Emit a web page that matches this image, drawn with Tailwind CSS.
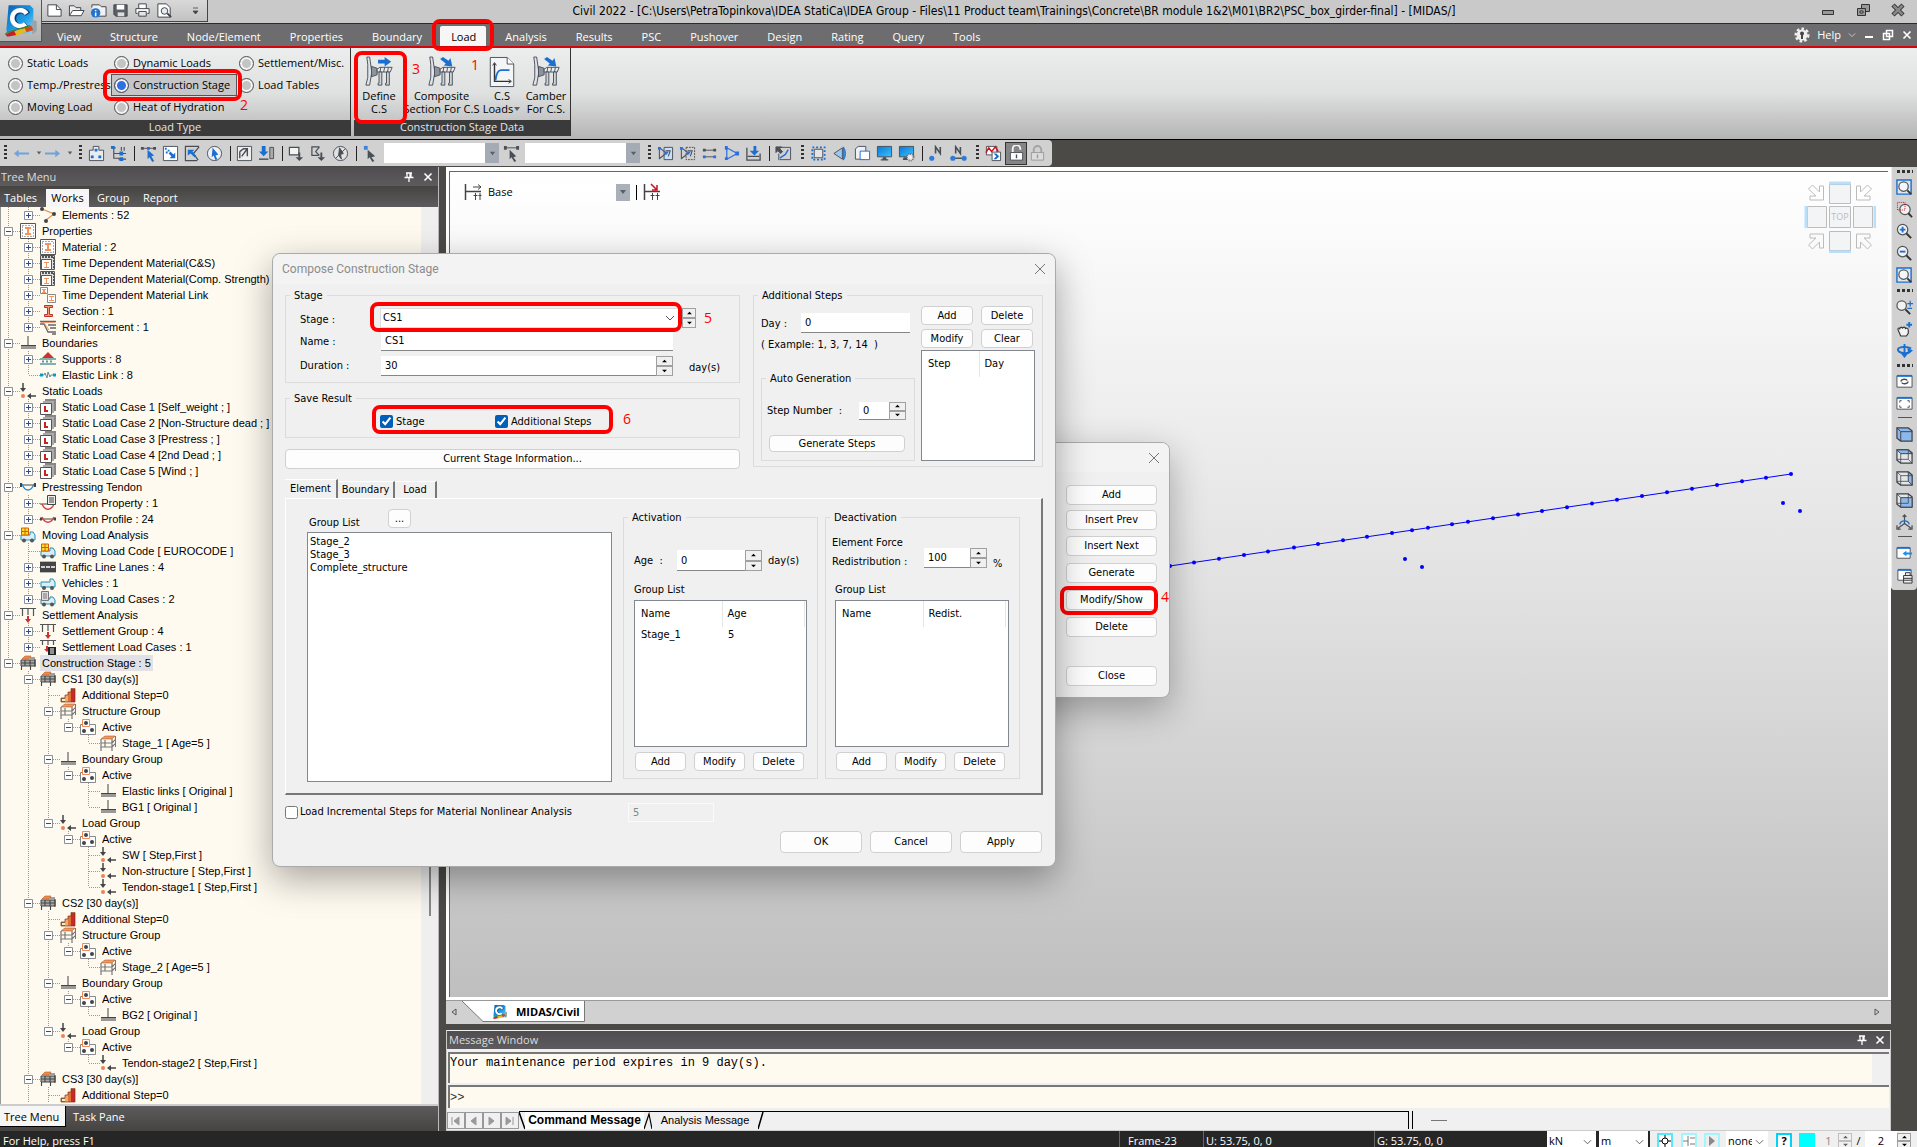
<!DOCTYPE html>
<html lang="en">
<head>
  <meta charset="UTF-8" />
  <title>Civil 2022</title>
  <meta name="viewport" content="width=device-width, initial-scale=1.0" />
  <script src="https://cdn.jsdelivr.net/npm/@tailwindcss/browser@4"></script>
</head>
<body class="relative h-screen flex flex-col overflow-hidden bg-[#4b4a46] text-black text-[11px] leading-[14px] font-['Open_Sans','Noto_Sans',sans-serif]">

  <!-- Icon sprite -->
  <svg class="absolute w-0 h-0">
    <defs>
      <linearGradient id="logoBg" x1="0" y1="0" x2="1" y2="1"><stop offset="0" stop-color="#0a5fb4" /><stop offset=".6" stop-color="#1fa0e8" /><stop offset="1" stop-color="#8fd8f8" /></linearGradient>
      <linearGradient id="screen" x1="0" y1="0" x2="1" y2="1"><stop offset="0" stop-color="#0a78d8" /><stop offset="1" stop-color="#38c4ff" /></linearGradient>
    </defs>

    <symbol id="logo" viewBox="0 0 32 32">
      <path d="M5 2h19l3 3v20l-3 2H4l-1-3z" fill="url(#logoBg)" />
      <path d="M26 15l4 1v9l-4 3z" fill="#9aa3a8" />
      <path d="M22 10a7 7 0 1 0-1 9" fill="none" stroke="#0b3f78" stroke-width="5" />
      <path d="M21 9.500a7 7 0 1 0-1 9" fill="none" stroke="#fff" stroke-width="4" />
      <path d="M2 28l9-4 3 4-10 2z" fill="#c8201c" /><path d="M10 25l10-3 2 3-10 4z" fill="#e8b81c" /><path d="M19 22l6-2 2 4-6 2z" fill="#d04a1c" />
      <path d="M2 28l2-2 20-6" fill="none" stroke="#3a8c30" stroke-width="1" />
    </symbol>

    <!-- quick access -->
    <symbol id="q-new" viewBox="0 0 18 18"><path d="M2 3h9l5 5v7H2z" fill="#fff" stroke="#3c4148" /><path d="M11 3v5h5" fill="none" stroke="#3c4148" /></symbol>
    <symbol id="q-open" viewBox="0 0 18 18"><path d="M1.500 14.500V4h5l2 2h5v3" fill="#eee" stroke="#3c4148" /><path d="M1.500 14.500L5 9h12l-3 5.500z" fill="#fff" stroke="#3c4148" /></symbol>
    <symbol id="q-info" viewBox="0 0 18 18"><path d="M2 6V3h8l2 2h5v10H9" fill="#f2f2f2" stroke="#3c4148" /><circle cx="6" cy="11.500" r="5" fill="#1f74d0" /><path d="M6 8.500v1.200M6 11v4" stroke="#fff" stroke-width="1.600" /></symbol>
    <symbol id="q-save" viewBox="0 0 18 18"><path d="M2 3h14v12H4l-2-2z" fill="#5a6068" stroke="#3c4148" /><path d="M5 3h8v5H5z" fill="#fff" /><path d="M6 11h7v4H6z" fill="#ddd" /></symbol>
    <symbol id="q-print" viewBox="0 0 18 18"><path d="M5 7V2h8v5M4 12H2V7h14v5h-2" fill="#fff" stroke="#3c4148" /><path d="M5 10h8v5H5z" fill="#e4e4e4" stroke="#3c4148" /></symbol>
    <symbol id="q-preview" viewBox="0 0 18 18"><path d="M2 2h9l4 4v10H2z" fill="#fff" stroke="#3c4148" /><circle cx="9" cy="9.500" r="3.500" fill="#e6ecf4" stroke="#3c4148" /><path d="M12 12l4 4" stroke="#3c4148" stroke-width="2" /></symbol>

    <!-- ribbon -->
    <symbol id="r-stage" viewBox="0 0 32 36">
      <path d="M3 2h3l2 14v4L6 32H2l2-8V10z" fill="#dfe4ea" stroke="#4a4f57" />
      <path d="M8 12l6 2v7l-6 2z" fill="#8e949c" stroke="#4a4f57" />
      <path d="M14 15l3-2h13l-2 5H14z" fill="#e9edf2" stroke="#4a4f57" /><path d="M18 13l-1 5M22 13l-1 5M26 13l-1 5" stroke="#4a4f57" />
      <path d="M16 18h3v14h-4v-2h1zM24 18h3v14h-4v-2h1z" fill="#cfd4da" stroke="#4a4f57" />
    </symbol>
    <symbol id="r-arrow" viewBox="0 0 32 36"><path d="M15 5h7V2l7 5-7 5V9h-7z" fill="#1b6fd0" /></symbol>
    <symbol id="r-arrow-down" viewBox="0 0 32 36"><path d="M17 2l6 4 2-3 2 9-9-1 2-2-6-5z" fill="#1b6fd0" /></symbol>
    <symbol id="r-loads" viewBox="0 0 32 36"><path d="M3.500 2.500h18l7 7v24h-25z" fill="#f3f5f6" stroke="#4a4f57" /><path d="M21.500 2.500v7h7" fill="#fff" stroke="#4a4f57" /><path d="M8 9v19h17" fill="none" stroke="#333" stroke-width="1.500" /><path d="M6 11l2-3 2 3M23 26l3 2-3 2" fill="none" stroke="#333" /><path d="M9 27c1-8 3-11 6-11h9" fill="none" stroke="#1b6fd0" stroke-width="2" /></symbol>

    <!-- toolbar -->
    <symbol id="t-back" viewBox="0 0 18 18"><path d="M1 9l5-4v3h11v2H6v3z" fill="#6fa3dc" /></symbol>
    <symbol id="t-fwd" viewBox="0 0 18 18"><path d="M17 9l-5-4v3H1v2h11v3z" fill="#6fa3dc" /></symbol>
    <symbol id="t-group" viewBox="0 0 18 18"><path d="M1.500 5.500h4v-4h6v4h5v11h-15z" fill="#e8ecf0" stroke="#4a4f57" /><path d="M7 4h3v3H7zM3 11h3v3H3zM11 11h3v3h-3z" fill="#1b6fd0" /></symbol>
    <symbol id="t-tree" viewBox="0 0 18 18"><path d="M2 3h4M4 3v11h6M4 9h6M12 2v4M15 2v4M9 9h8M9 15h8" fill="none" stroke="#4a4f57" stroke-width="1.200" /><path d="M1 1h4v3H1zM10 7h4v4h-4zM10 13h4v4h-4z" fill="#1b6fd0" /></symbol>
    <symbol id="t-select" viewBox="0 0 18 18"><path d="M2 3.500h14" stroke="#4a4f57" stroke-width="1" /><path d="M1 2h3v3H1zM14 2h3v3h-3z" fill="#4a4f57" /><path d="M7.500 2h3v3h-3zM8 5l7 6-3 1 3 5-2 1-3-5-2 2z" fill="#1b6fd0" /></symbol>
    <symbol id="t-window" viewBox="0 0 18 18"><path d="M1.500 1.500h15v15h-15z" fill="#fff" stroke="#4a4f57" /><path d="M3 3h2v2H3zM6 5h2v2H6zM4 7h2v2H4zM14 8v6H8l2-2-3-3 2-2 3 3z" fill="#1b6fd0" /></symbol>
    <symbol id="t-poly" viewBox="0 0 18 18"><path d="M16 1.500H1.500v15H14M16 2l-6 7 5 7" fill="none" stroke="#4a4f57" stroke-width="1.300" /><path d="M4 5h7l-2 2 4 5-2 1-4-4-3 2z" fill="#1b6fd0" /></symbol>
    <symbol id="t-circle" viewBox="0 0 18 18"><circle cx="9" cy="9" r="7.500" fill="#eef1f4" stroke="#4a4f57" /><path d="M7 3l6 7-3 1 2 4-2 1-2-5-2 2z" fill="#1b6fd0" /></symbol>
    <symbol id="t-undo" viewBox="0 0 18 18"><path d="M1.500 1.500h15v15h-15z" fill="#eee" stroke="#4a4f57" /><path d="M4 14V7M4 7l4-3h4v8M12 4l-6 8" fill="none" stroke="#4a4f57" stroke-width="1.500" /></symbol>
    <symbol id="t-recent" viewBox="0 0 18 18"><path d="M4 1h4v6h3l-5 5-5-5h3z" fill="#1b6fd0" /><path d="M1 15h10" stroke="#4a4f57" stroke-width="1.500" /><path d="M12.500 2.500h4v12h-4z" fill="#aaa" stroke="#4a4f57" /></symbol>
    <symbol id="t-un1" viewBox="0 0 18 18"><path d="M1.500 2.500h10v8h-10z" fill="#f4f4f4" stroke="#4a4f57" stroke-width="1.300" /><path d="M11 8h2v5h3l-4 4-4-4h3z" fill="#4a4f57" /></symbol>
    <symbol id="t-un2" viewBox="0 0 18 18"><path d="M10 2H2v9h7M10 2L6 7l4 4" fill="none" stroke="#4a4f57" stroke-width="1.300" /><path d="M11 8h2v5h3l-4 4-4-4h3z" fill="#4a4f57" /></symbol>
    <symbol id="t-un3" viewBox="0 0 18 18"><circle cx="9" cy="9" r="7.500" fill="#e2e2e2" stroke="#4a4f57" /><path d="M8 3l4 6-3 1 1 5-3-4zM4 14L14 4" fill="#4a4f57" stroke="#4a4f57" /></symbol>
    <symbol id="t-node" viewBox="0 0 18 18"><path d="M2 1h4v4H2z" fill="#3b82d8" /><path d="M6 5l8 7-4 1 3 4-2 1-3-5-2 2z" fill="#4a4f57" /></symbol>
    <symbol id="t-elem" viewBox="0 0 18 18"><path d="M2 3h14" stroke="#4a4f57" stroke-width="1" /><path d="M1 1h3v4H1zM14 1h3v4h-3zM7 5l7 7-3 1 3 4-2 1-3-5-2 2z" fill="#4a4f57" /></symbol>
    <symbol id="t-act1" viewBox="0 0 18 18"><path d="M7.500 2.500h9v13h-9z" fill="#c9dff5" stroke="#4a4f57" /><path d="M2.500 3v12M3 3l6 5M3 14l9-7M9 6h5l-2 6" fill="none" stroke="#4a4f57" stroke-width="1.100" /><path d="M1 2h3v3H1zM8 7h3v3H8z" fill="#2c6fe0" /></symbol>
    <symbol id="t-act2" viewBox="0 0 18 18"><path d="M7.500 2.500h9v13h-9z" fill="none" stroke="#4a4f57" stroke-dasharray="2 1" /><path d="M2.500 3v12M3 3l6 5M3 14l9-7M9 6h5l-2 6" fill="none" stroke="#4a4f57" stroke-width="1.100" /><path d="M1 2h3v3H1zM8 7h3v3H8z" fill="#2c6fe0" /></symbol>
    <symbol id="t-act3" viewBox="0 0 18 18"><path d="M3 5.500h12M3 12.500h12" stroke="#4a4f57" stroke-width="1" /><path d="M2 4h3v3H2zM13 4h3v3h-3z" fill="#4a4f57" /><path d="M2 11h3v3H2zM13 11h3v3h-3z" fill="#2c6fe0" /></symbol>
    <symbol id="t-act4" viewBox="0 0 18 18"><path d="M4 3l11 6-11 6z" fill="none" stroke="#2c6fe0" stroke-width="1.300" /><path d="M2 1h3v4H2zM13 7h4v4h-4zM2 13h3v3H2z" fill="#2c6fe0" /></symbol>
    <symbol id="t-act5" viewBox="0 0 18 18"><path d="M2 3v13h14V9M3 12h12" fill="none" stroke="#4a4f57" stroke-width="1.400" /><path d="M9 1h3v5h3l-5 5-5-5h4z" fill="#1b6fd0" /></symbol>
    <symbol id="t-act6" viewBox="0 0 18 18"><path d="M5 2.500h11.500v13H5" fill="none" stroke="#4a4f57" /><path d="M1 8V2h6L5 4l3 3-2 2-3-3zM4 16V9" fill="#4a4f57" stroke="#4a4f57" /><path d="M5 14l6-4 3-5" fill="none" stroke="#2c6fe0" stroke-width="1.600" /></symbol>
    <symbol id="t-sel" viewBox="0 0 18 18"><path d="M2.500 2.500h13v13h-13z" fill="none" stroke="#1b6fd0" stroke-width="2" stroke-dasharray="2 2" /><path d="M4.500 4.500h9v9h-9z" fill="#e4e4e4" stroke="#4a4f57" /></symbol>
    <symbol id="t-persp" viewBox="0 0 18 18"><path d="M2 9l9-6v12z" fill="#9cc8f0" stroke="#4a4f57" /><path d="M12 2c3 4 3 10 0 14z" fill="#3f8fe0" stroke="#1b6fd0" /></symbol>
    <symbol id="t-hide" viewBox="0 0 18 18"><path d="M1.500 4l3-2.500h8V12l-2 3h-9z" fill="#eef1f4" stroke="#4a4f57" /><path d="M6.500 6.500h10v9h-10z" fill="#fff" stroke="#1b6fd0" /></symbol>
    <symbol id="t-mon" viewBox="0 0 18 18"><path d="M1.500 1.500h15v11h-15z" fill="url(#screen)" stroke="#4a4f57" /><path d="M7 13h4v2h2v1.500H5V15h2z" fill="#4a4f57" /></symbol>
    <symbol id="t-mon2" viewBox="0 0 18 18"><path d="M1.500 1.500h15v11h-15z" fill="url(#screen)" stroke="#4a4f57" /><path d="M6 13h4v3H5z" fill="#4a4f57" /><circle cx="13" cy="13" r="3.500" fill="#eee" stroke="#666" stroke-dasharray="1 1" stroke-width="2" /></symbol>
    <symbol id="t-n1" viewBox="0 0 18 18"><path d="M8 9V2l5 7V2" fill="none" stroke="#4a4f57" stroke-width="1.700" /><circle cx="4" cy="14" r="2.700" fill="#2c7cd8" /></symbol>
    <symbol id="t-n2" viewBox="0 0 18 18"><path d="M6 9V2l5 7V2" fill="none" stroke="#4a4f57" stroke-width="1.700" /><path d="M3 14h12" stroke="#4a4f57" stroke-width="1.500" /><circle cx="3" cy="14" r="2.700" fill="#2c7cd8" /><circle cx="15" cy="14" r="2.700" fill="#2c7cd8" /></symbol>
    <symbol id="t-chk" viewBox="0 0 18 18"><path d="M1.500 1.500h11v9h-11z" fill="#fff" stroke="#4a4f57" /><path d="M1 8l3-5 3 4 4-5 3 5" fill="none" stroke="#d01020" stroke-width="1.600" /><path d="M7.500 7.500h9v9h-9z" fill="#fff" stroke="#4a4f57" /><path d="M9 9h3l3 3-3 3H9l3-3z" fill="#1b6fd0" /></symbol>
    <symbol id="t-unlock" viewBox="0 0 18 18"><path d="M5 8V4a4 4 0 0 1 8 0v1" fill="none" stroke="#f4f4f4" stroke-width="2" /><path d="M2.500 8h13v8h-13z" fill="#fff" stroke="#4a4f57" /><path d="M9 10v4" stroke="#4a4f57" stroke-width="1.500" /></symbol>
    <symbol id="t-lock" viewBox="0 0 18 18"><path d="M5 8V5a4 4 0 0 1 8 0v3" fill="none" stroke="#a4a4a4" stroke-width="2" /><path d="M2.500 8h13v8h-13z" fill="#dcdcdc" stroke="#9a9a9a" /><path d="M9 10v4" stroke="#9a9a9a" stroke-width="1.500" /></symbol>

    <!-- right toolbar -->
    <symbol id="v-fit" viewBox="0 0 18 18"><path d="M1 1h15v15H1z" fill="#dfe6ee" stroke="#1b6fd0" stroke-width="1.500" /><circle cx="8" cy="8" r="5" fill="#f4f6f8" stroke="#555" stroke-width="1.300" /><path d="M12 12l4 4" stroke="#333" stroke-width="2" /></symbol>
    <symbol id="v-win" viewBox="0 0 18 18"><circle cx="9.500" cy="9" r="5.500" fill="#f0f2f4" stroke="#555" stroke-width="1.300" /><path d="M13 13l4 4" stroke="#333" stroke-width="2" /><path d="M1.500 1.500h8v8h-8z" fill="none" stroke="#d01020" stroke-dasharray="1 1" /></symbol>
    <symbol id="v-in" viewBox="0 0 18 18"><circle cx="7" cy="7" r="5.500" fill="#f0f2f4" stroke="#555" stroke-width="1.300" /><path d="M11 11l5 5" stroke="#333" stroke-width="2.200" /><path d="M4 7h6M7 4v6" stroke="#1b6fd0" stroke-width="2" /></symbol>
    <symbol id="v-out" viewBox="0 0 18 18"><circle cx="7" cy="7" r="5.500" fill="#f0f2f4" stroke="#555" stroke-width="1.300" /><path d="M11 11l5 5" stroke="#333" stroke-width="2.200" /><path d="M4 7h6" stroke="#1b6fd0" stroke-width="2" /></symbol>
    <symbol id="v-dyn" viewBox="0 0 18 18"><circle cx="6" cy="8" r="5" fill="#f0f2f4" stroke="#555" stroke-width="1.300" /><path d="M10 12l5 5" stroke="#333" stroke-width="2" /><path d="M12 6h6M15 3v6M12 11h5" stroke="#1b6fd0" stroke-width="1.300" /></symbol>
    <symbol id="v-pan" viewBox="0 0 18 18"><path d="M2 10c0-2 2-2 2 0 0-3 2-3 3-1 0-2 3-2 3 0 2-1 3 0 3 2v3l-2 3H5z" fill="#f4f4f4" stroke="#333" stroke-width="1.200" /><path d="M11 5h6M14 2v6" stroke="#1b6fd0" stroke-width="2" /></symbol>
    <symbol id="v-rot" viewBox="0 0 18 18"><path d="M8 2h2v10h3l-4 5-4-5h3z" fill="#1b6fd0" /><path d="M14 11c-6 2-12 0-12-3s10-4 14-1" fill="none" stroke="#1b6fd0" stroke-width="2" /><path d="M12 6l6 3-5 4z" fill="#1b6fd0" /></symbol>
    <symbol id="v-redraw" viewBox="0 0 18 18"><path d="M1 3h16v12H1z" fill="#fff" stroke="#4a4f57" /><path d="M1 3h16" stroke="#1b6fd0" stroke-width="2" /><path d="M5 9c1-3 6-3 7-1M13 9c-1 3-6 3-7 1" fill="none" stroke="#4a4f57" stroke-width="1.400" /></symbol>
    <symbol id="v-full" viewBox="0 0 18 18"><path d="M1 3h16v12H1z" fill="#fff" stroke="#4a4f57" /><path d="M1 3h16" stroke="#1b6fd0" stroke-width="2" /><path d="M4 8V6h2M12 6h2v2M4 11v2h2M12 13h2v-2" fill="none" stroke="#4a4f57" /></symbol>
    <symbol id="v-cube1" viewBox="0 0 18 18"><path d="M1 2h12l4 3v11H5l-4-3z" fill="#8db8ea" stroke="#3c4148" stroke-width="1.300" /><path d="M1 2l4 4h12M5 6v10" fill="none" stroke="#3c4148" /></symbol>
    <symbol id="v-cube2" viewBox="0 0 18 18"><path d="M1 2h12l4 3v11H5l-4-3z" fill="#e4e6e8" stroke="#3c4148" stroke-width="1.300" /><path d="M1 2h12l4 4H5z" fill="#8db8ea" stroke="#3c4148" /><path d="M5 6v10M13 2v10H1M13 12l4 4" fill="none" stroke="#3c4148" stroke-width=".8" /></symbol>
    <symbol id="v-cube3" viewBox="0 0 18 18"><path d="M1 2h12l4 3v11H5l-4-3z" fill="#e4e6e8" stroke="#3c4148" stroke-width="1.300" /><path d="M13 2l4 4v10l-4-4z" fill="#8db8ea" stroke="#3c4148" /><path d="M1 2l4 4h12M5 6v10M13 12H1" fill="none" stroke="#3c4148" stroke-width=".8" /></symbol>
    <symbol id="v-cube4" viewBox="0 0 18 18"><path d="M1 2h12l4 3v11H5l-4-3z" fill="#e4e6e8" stroke="#3c4148" stroke-width="1.300" /><path d="M5 6h12v10H5z" fill="#8db8ea" stroke="#3c4148" /><path d="M1 2l4 4M13 2v10H1" fill="none" stroke="#3c4148" stroke-width=".8" /></symbol>
    <symbol id="v-axis" viewBox="0 0 18 18"><path d="M9 1v9M9 10l-7 5M9 10l7 5M7 3l2-2 2 2M1 12v4h4M17 12v4h-4" fill="none" stroke="#4a4f57" stroke-width="1.300" /><path d="M4 11c1-5 9-5 10 0" fill="none" stroke="#1b6fd0" stroke-width="1.400" /></symbol>
    <symbol id="v-prev" viewBox="0 0 18 18"><path d="M1 3h14v11H1z" fill="#fff" stroke="#4a4f57" /><path d="M1 3h14" stroke="#1b6fd0" stroke-width="2" /><path d="M7 9l4-3v2h6v2h-6v2z" fill="#1b8fe8" /></symbol>
    <symbol id="v-lock" viewBox="0 0 18 18"><path d="M2 3h14v11H2z" fill="#fff" stroke="#4a4f57" /><path d="M2 3h14" stroke="#1b6fd0" stroke-width="2" /><path d="M8 9h9v8H8zM10 9V6h5v3M8 12h9M8 14h9" fill="#eee" stroke="#333" /></symbol>

    <!-- tree -->
    <symbol id="i-elem" viewBox="0 0 16 16"><path d="M2 2l12 5-8 6" fill="none" stroke="#e0904a" stroke-width="1.200" /><circle cx="2" cy="2" r="2" fill="#444" /><circle cx="14" cy="7" r="2" fill="#444" /><circle cx="6" cy="14" r="2" fill="#444" /></symbol>
    <symbol id="i-prop" viewBox="0 0 16 16"><path d="M.5.5h15v15H.5z" fill="#fff" stroke="#555" /><path d="M2.500 2.500h11v11h-11z" fill="none" stroke="#555" stroke-dasharray="1 2" /><path d="M5 4h6v2H9v4h2v2H5v-2h2V6H5z" fill="#f4935a" /></symbol>
    <symbol id="i-tdm" viewBox="0 0 16 16"><path d="M.5.5h14v14H.5z" fill="#ddd" stroke="#555" /><path d="M2 2h12v12" fill="none" stroke="#555" stroke-width="2" stroke-dasharray="2 1" /><path d="M1.500 4.500h10v10h-10z" fill="#fff" stroke="#555" /><path d="M4 7h5v1H7v4h2v1H4v-1h2V8H4z" fill="#f4935a" /></symbol>
    <symbol id="i-link" viewBox="0 0 16 16"><path d="M.5.5h7v6h-7z" fill="#fff" stroke="#888" /><path d="M2 2h4v1H5v2h1v1H2V5h1V3H2z" fill="#f4935a" /><path d="M7.500 7.500h8v8h-8z" fill="#fff" stroke="#888" /><path d="M9 9h5v1h-2v3h2v1H9v-1h2v-3H9z" fill="#f4935a" /></symbol>
    <symbol id="i-sect" viewBox="0 0 16 16"><path d="M4.500 2.500h8v2h-3v7h3v2h-8v-2h3v-7h-3z" fill="#f09a70" stroke="#c03030" /></symbol>
    <symbol id="i-reinf" viewBox="0 0 16 16"><path d="M0 2.500h16M0 5h4l4 8h8M8 6h8M10 9h6M12 15h4" fill="none" stroke="#666" stroke-width="1.300" /><path d="M1 3.500h14M5 5l4 6" stroke="#f09a70" /></symbol>
    <symbol id="i-bound" viewBox="0 0 16 16"><path d="M8 1v10" stroke="#444" /><path d="M1 10.500h15" stroke="#444" /><path d="M1 11h15v3H1z" fill="#999" /></symbol>
    <symbol id="i-supp" viewBox="0 0 16 16"><path d="M8 1l6 6H2z" fill="#d03030" /><path d="M0 8h16M0 13h16" stroke="#5a9a9a" stroke-width="1.500" /><path d="M2 10.500h12" stroke="#5a9a9a" stroke-width="2" stroke-dasharray="2 2" /></symbol>
    <symbol id="i-elink" viewBox="0 0 16 16"><path d="M0 8h4l1-2 2 5 1-6 2 5 1-2h5" fill="none" stroke="#5a8a9a" /><path d="M0 6.500h3v3H0zM13 6.500h3v3h-3z" fill="#0a9ad0" /></symbol>
    <symbol id="i-load" viewBox="0 0 16 16"><path d="M3 0v6" stroke="#444" stroke-width="1.500" /><path d="M0 5h6L3 9zM7 13l4-3v6z" fill="#444" /><path d="M10 13h6" stroke="#444" stroke-width="1.500" /><circle cx="3" cy="13" r="2" fill="#f08050" /></symbol>
    <symbol id="i-case" viewBox="0 0 16 16"><path d="M5 0h11v12H5z" fill="#888" /><path d="M3 2h11v12H3z" fill="#aaa" /><path d="M.5 4.500h11v11H.5z" fill="#fff" stroke="#555" /><path d="M4 7h2v4h2v2H4z" fill="#d02020" /></symbol>
    <symbol id="i-tendon" viewBox="0 0 16 16"><path d="M0 6h16" stroke="#444" /><path d="M2 5c3 8 9 8 12 0" fill="none" stroke="#2f8fd0" stroke-width="1.400" /><path d="M0 4h2v4H0zM14 4h2v4h-2z" fill="#444" /></symbol>
    <symbol id="i-tprop" viewBox="0 0 16 16"><path d="M0 9h16" stroke="#444" /><path d="M2 9c3 7 9 7 12 0" fill="none" stroke="#d04040" stroke-width="1.400" /><path d="M7.500.5h8v9h-8z" fill="#eee" stroke="#444" /><path d="M9 3h5M9 5h5M9 7h5" stroke="#444" /></symbol>
    <symbol id="i-tprof" viewBox="0 0 16 16"><path d="M0 8h16" stroke="#444" /><path d="M2 6c3 7 9 7 12 0" fill="none" stroke="#d04040" stroke-width="1.400" /><path d="M0 6.500h2v3H0zM14 6.500h2v3h-2z" fill="#444" /></symbol>
    <symbol id="i-truck" viewBox="0 0 16 16"><path d="M1 7h9V4h3l2 3v5H1z" fill="#d8eef4" stroke="#2090b8" /><circle cx="4" cy="13" r="2" fill="#555" /><circle cx="12" cy="13" r="2" fill="#555" /></symbol>
    <symbol id="i-mload" viewBox="0 0 16 16"><path d="M1 8h9V5h3l2 3v5H1z" fill="#d8eef4" stroke="#2090b8" /><path d="M1.500 1h7v7h-7z" fill="#ffe020" stroke="#d06010" /><path d="M5 1v7M2 4.500h6" stroke="#d06010" /><circle cx="4" cy="13.500" r="2" fill="#555" /><circle cx="12" cy="13.500" r="2" fill="#555" /></symbol>
    <symbol id="i-lane" viewBox="0 0 16 16"><path d="M0 2h16v12H0z" fill="#bbb" /><path d="M0 3h16v10H0z" fill="#444" /><path d="M1 8h14" stroke="#fff" stroke-width="1.500" stroke-dasharray="4 1" /></symbol>
    <symbol id="i-mcase" viewBox="0 0 16 16"><path d="M1 8h9V6h3l2 3v4H1z" fill="#d8eef4" stroke="#2090b8" /><path d="M1.500.5h7v9h-7z" fill="#ddd" stroke="#777" /><path d="M3 3h4M3 5h4M3 7h4" stroke="#777" /><circle cx="4" cy="13.500" r="2" fill="#555" /><circle cx="12" cy="13.500" r="2" fill="#555" /></symbol>
    <symbol id="i-settle" viewBox="0 0 16 16"><path d="M0 1.500h16M2.500 2v7M8 2v6M13.500 2v7" stroke="#555" stroke-width="1.200" /><path d="M7 9h2v3h2l-3 4-3-4h2z" fill="#d03030" /></symbol>
    <symbol id="i-scase" viewBox="0 0 16 16"><path d="M0 1.500h16M2.500 2v4M8 2v4M13.500 2v4" stroke="#555" stroke-width="1.200" /><path d="M6 7h2v3h2l-3 3-3-3h2z" fill="#d03030" /><path d="M8 8h8v8H8z" fill="#222" /><path d="M10 10h4M10 12h4M10 14h4" stroke="#fff" /></symbol>
    <symbol id="i-cs" viewBox="0 0 16 16"><path d="M1 5h14v6H1z" fill="#aaa" stroke="#444" /><path d="M2 4l3-3h6L9 4z" fill="#f08a4a" stroke="#b06030" stroke-width=".6" /><path d="M1 8h14M5 5v6M10 5v6M1.500 11v4M10.500 11v4M15 4v8M10 3h5" stroke="#444" stroke-width="1.100" /></symbol>
    <symbol id="i-step" viewBox="0 0 16 16"><path d="M1.500 11.500h4v3h-4z" fill="#fff0a0" stroke="#555" stroke-width=".8" /><path d="M5 8h3v7H5z" fill="#f6a868" /><path d="M8 5h3v10H8z" fill="#e0703a" /><path d="M11 2h4v13h-4z" fill="#c82a2a" /><path d="M1 11h4V8h3V5h3V1.500h4V15H1z" fill="none" stroke="#803010" stroke-width=".7" /></symbol>
    <symbol id="i-sg" viewBox="0 0 16 16"><path d="M1 4l4-3h10l-3 3z" fill="#f0965a" stroke="#b06030" stroke-width=".6" /><path d="M1 4v12M12 4v12M15.500 1v11M1 8h11l3-3M1 12h11l3-3M5 5v7" fill="none" stroke="#777" stroke-width="1.200" /></symbol>
    <symbol id="i-active" viewBox="0 0 16 16"><path d="M.5 5.500h15v10H.5z" fill="#fff" stroke="#888" /><path d="M2.500.5h7v7h-7z" fill="#fff" stroke="#f08a5a" /><circle cx="6" cy="4" r="2" fill="#444" /><circle cx="4" cy="12" r="2" fill="#444" /><circle cx="12" cy="11" r="2" fill="#444" /></symbol>
    <symbol id="pin" viewBox="0 0 12 12"><path d="M3 2h6M4 2v4M8 2v4M7 2v4M1.500 6.500h9M6 7v4" stroke="#fff" stroke-width="1.300" /></symbol>
    <symbol id="cross" viewBox="0 0 12 12"><path d="M2.500 2.500l7 7M9.500 2.500l-7 7" stroke="currentColor" stroke-width="1.600" /></symbol>
    <symbol id="thin-cross" viewBox="0 0 12 12"><path d="M1 1l10 10M11 1L1 11" stroke="currentColor" /></symbol>
    <symbol id="chevron" viewBox="0 0 10 6"><path d="M1 1l4 4 4-4" fill="none" stroke="#555" /></symbol>
    <symbol id="caret" viewBox="0 0 8 8"><path d="M1 2h6L4 6z" fill="#5a5f66" /></symbol>
  </svg>

  <!-- Title bar -->
  <header class="relative h-6 shrink-0 flex items-start border-b border-[#2b2b2b] bg-[#c9c9c9]">
    <button aria-label="Application menu" class="absolute left-0 top-0 z-10 w-[42px] h-[42px] border-r border-b border-[#555] bg-linear-to-b from-[#d6d6d6] to-[#b2b2b2] flex items-center justify-center"><svg class="w-9 h-9"><use href="#logo" /></svg></button>
    <div id="quickBar" class="ml-[42px] w-[166px] h-[22px] pl-1 flex items-center gap-1 border-r border-b border-[#444] bg-linear-to-b from-[#d9d9d9] to-[#c2c2c2]"></div>
    <h1 class="flex-1 pt-[3px] text-center text-[12px] leading-[16px] whitespace-nowrap font-['DejaVu_Sans_Condensed',sans-serif]">Civil 2022 - [C:\Users\PetraTopinkova\IDEA StatiCa\IDEA Group - Files\11 Product team\Trainings\Concrete\BR module 1&amp;2\M01\BR2\PSC_box_girder-final] - [MIDAS/]</h1>
    <div class="flex pr-[11px] pt-[2px] gap-[19px]">
      <button aria-label="Minimize" class="w-4 h-4"><svg viewBox="0 0 16 16"><path d="M2.500 8.500h11v4h-11z" fill="#999" stroke="#333" /></svg></button>
      <button aria-label="Restore" class="w-4 h-4"><svg viewBox="0 0 16 16"><path d="M6.500 2.500h8v7h-8z" fill="#999" stroke="#333" /><path d="M2.500 6.500h8v7h-8z" fill="#999" stroke="#333" /><path d="M5 9h3v2H5z" fill="#ccc" stroke="#333" /></svg></button>
      <button aria-label="Close" class="w-4 h-4"><svg viewBox="0 0 16 16"><path d="M3 3l10 10M13 3L3 13" stroke="#333" stroke-width="4.500" /><path d="M3.500 3.500l9 9M12.500 3.500l-9 9" stroke="#888" stroke-width="2.500" /></svg></button>
    </div>
  </header>

  <!-- Menu -->
  <nav class="h-6 shrink-0 flex items-end border-b-2 border-[#d4040c] bg-[#6d6d6f] pl-[42px] text-white">
    <a href="#" class="mx-1 pl-[11px] pr-[10px] pb-[2px]">View</a>
    <a href="#" class="mx-1 pl-[11px] pr-[10px] pb-[2px]">Structure</a>
    <a href="#" class="mx-1 pl-[11px] pr-[10px] pb-[2px]">Node/Element</a>
    <a href="#" class="mx-1 pl-[11px] pr-[10px] pb-[2px]">Properties</a>
    <a href="#" class="mx-1 pl-[11px] pr-[10px] pb-[2px]">Boundary</a>
    <a href="#" class="relative mx-1 pl-[11px] pr-[10px] pt-1 pb-[2px] rounded-t-xs bg-[#f6f6f6] text-black">Load
      <span class="absolute -inset-x-2 -top-[7px] -bottom-[5px] z-20 border-4 border-[#ff0000] rounded-lg"></span>
    </a>
    <a href="#" class="mx-1 pl-[11px] pr-[10px] pb-[2px]">Analysis</a>
    <a href="#" class="mx-1 pl-[11px] pr-[10px] pb-[2px]">Results</a>
    <a href="#" class="mx-1 pl-[11px] pr-[10px] pb-[2px]">PSC</a>
    <a href="#" class="mx-1 pl-[11px] pr-[10px] pb-[2px]">Pushover</a>
    <a href="#" class="mx-1 pl-[11px] pr-[10px] pb-[2px]">Design</a>
    <a href="#" class="mx-1 pl-[11px] pr-[10px] pb-[2px]">Rating</a>
    <a href="#" class="mx-1 pl-[11px] pr-[10px] pb-[2px]">Query</a>
    <a href="#" class="mx-1 pl-[11px] pr-[10px] pb-[2px]">Tools</a>
    <div class="ml-auto mb-[3px] pr-1 flex items-center gap-[7px]">
      <svg class="w-4 h-4" viewBox="0 0 16 16"><circle cx="8" cy="8" r="6" fill="none" stroke="#eee" stroke-width="3" stroke-dasharray="2.500 2" /><circle cx="8" cy="8" r="5.500" fill="#eee" /><circle cx="8" cy="6.500" r="2" fill="#444" /><path d="M7 7h2v5H7z" fill="#444" /></svg>
      <a href="#">Help</a>
      <svg class="w-2 h-[6px]" viewBox="0 0 10 6"><path d="M1 1l4 4 4-4" fill="none" stroke="#ddd" /></svg>
      <button aria-label="Minimize view" class="w-3 h-3 text-white"><svg viewBox="0 0 12 12"><path d="M2 8h8" stroke="#fff" stroke-width="2" /></svg></button>
      <button aria-label="Restore view" class="w-3 h-3"><svg viewBox="0 0 12 12"><path d="M4.500 1.500h6v6h-6zM1.500 4.500h6v6h-6z" fill="#6d6d6f" stroke="#fff" stroke-width="1.500" /></svg></button>
      <button aria-label="Close view" class="w-3 h-3 text-white"><svg class="w-3 h-3"><use href="#cross" /></svg></button>
    </div>
  </nav>

  <!-- Ribbon -->
  <section class="h-[92px] shrink-0 flex gap-[3px] border-b border-black bg-linear-to-b from-[#eceeed] via-[#dfe0e0] to-[#b4b4b4]">
    <div class="w-[351px] h-[88px] flex flex-col border-r border-[#333]">
      <div id="loadTypes" class="flex-1 pt-1 pl-2 grid grid-cols-[106px_125px_110px] auto-rows-[22px] whitespace-nowrap"></div>
      <h2 class="h-4 bg-[#3a3a3b] text-[#e4e4e4] text-center">Load Type</h2>
    </div>
    <div class="w-[217px] h-[88px] flex flex-col border-r border-[#333]">
      <div class="relative flex-1 pt-[7px] flex text-center leading-[13px] whitespace-nowrap">
        <button class="w-[50px] flex flex-col items-center">
          <span class="relative w-[30px] h-[34px]"><svg class="absolute w-full h-full"><use href="#r-stage" /></svg><svg class="absolute w-full h-full"><use href="#r-arrow" /></svg></span>
          <span>Define</span><span>C.S</span>
        </button>
        <button class="w-[75px] flex flex-col items-center">
          <span class="relative w-[30px] h-[34px]"><svg class="absolute w-full h-full"><use href="#r-stage" /></svg><svg class="absolute w-full h-full"><use href="#r-arrow-down" /></svg></span>
          <span>Composite</span><span>Section For C.S</span>
        </button>
        <button class="w-[46px] flex flex-col items-center">
          <svg class="w-[30px] h-[34px]"><use href="#r-loads" /></svg>
          <span>C.S</span><span class="flex items-center">Loads<svg class="w-2 h-2"><use href="#caret" /></svg></span>
        </button>
        <button class="w-[42px] flex flex-col items-center">
          <span class="relative w-[30px] h-[34px]"><svg class="absolute w-full h-full"><use href="#r-stage" /></svg><svg class="absolute w-full h-full"><use href="#r-arrow-down" /></svg></span>
          <span>Camber</span><span>For C.S.</span>
        </button>
        <span class="absolute left-0 top-[3px] w-[53px] h-[73px] z-20 border-4 border-[#ff0000] rounded-lg"></span>
        <span class="absolute left-[58px] top-[13px] text-sm leading-4 text-[#ff0000]">3</span>
        <span class="absolute left-[117px] top-[9px] text-sm leading-4 text-[#ff0000]">1</span>
      </div>
      <h2 class="h-4 bg-[#3a3a3b] text-[#e4e4e4] text-center">Construction Stage Data</h2>
    </div>
  </section>

  <!-- Toolbar -->
  <div id="mainBar" class="h-[26px] shrink-0 flex items-center self-start pr-[3px] rounded-r bg-[#d1d1d1]"></div>

  <div class="flex-1 min-h-0 flex pt-[1px]">
    <!-- Tree dock -->
    <aside class="w-[439px] shrink-0 flex flex-col border-r border-[#bbb]">
      <div class="h-[19px] shrink-0 flex items-center bg-linear-to-b from-[#4f4d4f] to-[#5d5b5d] text-[#dcdcdc]">
        <h2 class="flex-1 pl-[1px]">Tree Menu</h2>
        <button aria-label="Pin" class="w-[19px]"><svg class="w-3 h-3"><use href="#pin" /></svg></button>
        <button aria-label="Close tree" class="w-4 text-white"><svg class="w-3 h-3"><use href="#cross" /></svg></button>
      </div>
      <div class="h-[21px] shrink-0 flex items-end bg-linear-to-b from-[#454441] to-[#5d5b5d] text-white leading-[18px]">
        <a href="#" class="pl-1 w-[46px]">Tables</a>
        <a href="#" class="w-[43px] text-center bg-[#f6f6f6] text-black">Works</a>
        <a href="#" class="pl-2 w-[46px]">Group</a>
        <a href="#" class="pl-2">Report</a>
      </div>
      <div class="flex-1 min-h-0 flex border-l border-[#999] bg-[#fffaf0]">
        <ul id="tree" class="flex-1 overflow-hidden whitespace-nowrap font-['Liberation_Sans',Arial,sans-serif]"></ul>
        <div class="w-[17px] bg-[#efefef] flex flex-col items-center pt-[600px] pb-[188px]"><span class="w-[2px] flex-1 bg-[#888]"></span></div>
      </div>
      <div class="h-[27px] shrink-0 flex items-start border-t-2 border-[#ccc] bg-linear-to-b from-[#5d5b5d] to-[#454441] text-white leading-[21px]">
        <a href="#" class="px-1 w-[66px] h-[21px] bg-[#f6f6f6] text-black border-r border-b border-black">Tree Menu</a>
        <a href="#" class="px-[7px]">Task Pane</a>
      </div>
    </aside>

    <!-- Work area -->
    <main class="flex-1 min-w-0 flex flex-col pl-[7px]">
      <div class="relative flex-1 min-h-0 border-[3px] border-t-4 border-white bg-linear-to-b from-white via-[#e2e2e2] to-[#bfbfbf] shadow-[inset_1px_1px_0_#666]">
        <svg class="absolute inset-0 w-full h-full" id="model"></svg>
        <div class="relative flex items-center pt-3 pl-[15px] text-[11px]">
          <svg class="w-[18px] h-[18px]" viewBox="0 0 18 18"><path d="M1.500 1v16M1 8.500h16" stroke="#444" stroke-width="1.500" /><path d="M11.500 10v7M16 10v7M9.500 12.500h4M14.500 12.500h3M9 4h8M14 1.500L17 4l-3 2.500" fill="none" stroke="#444" /></svg>
          <select aria-label="Stage" class="ml-[6px] w-[128px] h-[17px] appearance-none bg-white/60 outline-none"><option>Base</option></select>
          <span class="w-[14px] h-[17px] bg-[#a9b0ba] flex items-center justify-center"><svg class="w-2 h-2"><use href="#caret" /></svg></span>
          <span class="mx-[6px] w-px h-[15px] bg-black"></span>
          <svg class="w-[18px] h-[18px]" viewBox="0 0 18 18"><path d="M1.500 1v16M1 8.500h16" stroke="#444" stroke-width="1.500" /><path d="M9.500 10v7M14.500 10v7M7.500 12.500h4M12.500 12.500h4" fill="none" stroke="#444" /><path d="M8 1l6 6M14 2v5H9" fill="none" stroke="#d01020" stroke-width="1.500" /></svg>
        </div>
        <svg class="absolute right-[12px] top-[10px] w-[72px] h-[72px]" viewBox="0 0 72 72" fill="none" stroke="#bcbcbc">
          <path d="M25.500 3.500h21v19h-21zM25.500 25.500h21v21h-21zM25.500 50.500h21v19h-21zM3.500 25.500h19v21h-19zM49.500 25.500h19v21h-19z" fill="#f3f4f6" />
          <path d="M25 2h22M25 71h22M2 25v22M71 25v22" stroke="#b8e0fa" stroke-width="3" />
          <path d="M4.500 8l4-4 7 7V5h4v14H6v-4h6z" />
          <path d="M67.500 8l-4-4-7 7V5h-4v14H66v-4h-6zM4.500 64l4 4 7-7v6h4V53H6v4h6zM67.500 64l-4 4-7-7v6h-4V53H66v4h-6z" />
          <text x="36" y="39" text-anchor="middle" font-size="9" fill="#bcbcbc" stroke="none">TOP</text>
        </svg>
      </div>
      <div class="h-[24px] shrink-0 flex items-start border-t border-[#999] bg-[#d1d1d1]">
        <button aria-label="Scroll left" class="w-4 h-[22px] flex items-center justify-center"><svg class="w-2 h-2" viewBox="0 0 8 8"><path d="M6 1v6L2 4z" fill="none" stroke="#555" /></svg></button>
        <a href="#" class="relative w-[124px] h-[21px] pl-[30px] flex items-center gap-2 font-bold">
          <svg class="absolute inset-0 w-full h-full" viewBox="0 0 124 21"><path d="M0 0l21 20.500h101.500V0" fill="#fff" stroke="#777" /></svg>
          <svg class="relative w-4 h-4"><use href="#logo" /></svg><span class="relative">MIDAS/Civil</span>
        </a>
        <button aria-label="Scroll right" class="ml-auto mr-[10px] h-[22px] flex items-center"><svg class="w-2 h-2" viewBox="0 0 8 8"><path d="M2 1v6l4-3z" fill="none" stroke="#555" /></svg></button>
      </div>

      <section class="mt-[6px] h-[101px] shrink-0 flex flex-col border border-t-[#eee] border-[#ccc] bg-[#f0f0f0]">
        <div class="h-[18px] shrink-0 flex items-center bg-linear-to-b from-[#4f4d4f] to-[#5d5b5d] text-[#dcdcdc]">
          <h2 class="flex-1 pl-[2px]">Message Window</h2>
          <button aria-label="Pin messages" class="w-[18px]"><svg class="w-3 h-3"><use href="#pin" /></svg></button>
          <button aria-label="Close messages" class="w-4 text-white"><svg class="w-3 h-3"><use href="#cross" /></svg></button>
        </div>
        <div class="mx-px mt-[3px] h-[31px] shrink-0 flex border-t-2 border-l-2 border-[#777] bg-[#fffaf0]">
          <p class="flex-1 pt-[2px] text-xs leading-[15px] font-['Liberation_Mono',monospace]">Your maintenance period expires in 9 day(s).</p>
          <span class="w-[17px] bg-[#f0f0f0]"></span>
        </div>
        <div class="mx-px mt-[2px] h-[23px] shrink-0 flex items-center border-t-2 border-l-2 border-[#777] bg-[#fffaf0]">
          <input aria-label="Command" value=">>" class="w-full text-xs outline-none text-[#333] font-['Liberation_Mono',monospace]" />
        </div>
        <div class="flex-1 pb-px flex items-end font-['Liberation_Sans',Arial,sans-serif] text-xs">
          <div id="msgNav" class="flex h-[17px]"></div>
          <div class="w-[890px] h-[18px] flex border-t border-r border-black">
            <svg class="w-[6px] h-[18px]" viewBox="0 0 6 18"><path d="M0 0l6 17" stroke="#000" stroke-width="1.500" /></svg>
            <a href="#" class="w-[119px] text-center font-bold leading-[17px] bg-white">Command Message</a>
            <svg class="w-[8px] h-[18px]" viewBox="0 0 8 18"><path d="M0 17L5 2l3 15" fill="none" stroke="#000" stroke-width="1.200" /></svg>
            <a href="#" class="w-[106px] text-center leading-[17px] text-[11px]">Analysis Message</a>
            <svg class="w-[6px] h-[18px]" viewBox="0 0 6 18"><path d="M0 17L5 0" stroke="#000" stroke-width="1.500" /></svg>
          </div>
          <span class="ml-[3px] w-px h-[18px] bg-black"></span>
          <span class="mb-2 ml-[18px] w-4 h-px bg-[#777]"></span>
        </div>
      </section>
    </main>

    <!-- View toolbar -->
    <div class="w-[26px] shrink-0">
      <div id="viewBar" class="flex flex-col items-center pb-1 rounded-b bg-[#d1d1d1] border-l border-[#eee]"></div>
    </div>
  </div>

  <!-- Status bar -->
  <footer class="h-4 shrink-0 flex items-start overflow-hidden bg-[#262626] text-white leading-[19px]">
    <span class="flex-1 pl-[3px]">For Help, press F1</span>
    <span class="w-[84px] pl-2 border-l border-[#666]">Frame-23</span>
    <span class="w-[171px] pl-[2px] border-l border-[#666]">U: 53.75, 0, 0</span>
    <span class="w-[173px] pl-[2px] border-l border-[#666]">G: 53.75, 0, 0</span>
    <span class="relative w-[49px] h-4 bg-white text-black mr-[3px]"><select aria-label="Force unit" class="appearance-none w-full h-[19px] pl-[2px] outline-none"><option>kN</option></select><svg class="absolute right-1 top-[8px] w-[9px] h-[6px] pointer-events-none"><use href="#chevron" /></svg></span>
    <span class="relative w-[49px] h-4 bg-white text-black mr-[2px]"><select aria-label="Length unit" class="appearance-none w-full h-[19px] pl-[2px] outline-none"><option>m</option></select><svg class="absolute right-1 top-[8px] w-[9px] h-[6px] pointer-events-none"><use href="#chevron" /></svg></span>
    <div class="w-[267px] h-[19px] pl-[7px] flex items-center bg-[#f0f0f0] text-black">
      <button aria-label="Snap" class="w-4 h-4 mr-2 border-2 border-cyan-300 bg-white"><svg viewBox="0 0 12 12"><path d="M0 6h12M6 0v12" stroke="#000" /><circle cx="6" cy="6" r="3" fill="#fff" stroke="#000" /></svg></button>
      <button aria-label="Snap mode" class="w-4 h-4 mr-[7px] border-2 border-cyan-200 bg-white"><svg viewBox="0 0 12 12"><path d="M0 6h5M5 1v10M7 3h5M7 9h5" stroke="#777" /></svg></button>
      <button aria-label="Play" class="w-4 h-4 mr-[6px] border-2 border-cyan-200 bg-[#eee]"><svg viewBox="0 0 12 12"><path d="M3 1l6 5-6 5z" fill="#888" /></svg></button>
      <span class="relative w-[42px] h-[19px] bg-white"><select aria-label="Filter" class="appearance-none w-[26px] h-[19px] pl-[2px] outline-none"><option>none</option></select><svg class="absolute right-1 top-[8px] w-[9px] h-[6px] pointer-events-none"><use href="#chevron" /></svg></span>
      <button class="ml-2 w-4 h-4 border-2 border-cyan-400 bg-white font-bold leading-3">?</button>
      <span class="ml-[7px] w-4 h-4 bg-[#00ffff]"></span>
      <input aria-label="Step" value="1" disabled class="ml-1 w-[19px] text-center text-[#888]" />
      <span data-spin class="w-[14px] h-4 flex flex-col opacity-60"></span>
      <span class="w-[13px] text-center">/</span>
      <input aria-label="Count" value="2" class="w-8 h-[19px] bg-white text-center outline-none" />
      <span data-spin class="w-[14px] h-4 flex flex-col"></span>
    </div>
  </footer>

  <!-- Construction stage list window -->
  <section class="absolute left-[850px] top-[442px] w-[320px] h-[256px] rounded-lg border border-[#aaa] bg-[#f0f0f0] shadow-[0_12px_36px_rgba(0,0,0,0.3)] font-['DejaVu_Sans_Condensed',sans-serif]">
    <div class="h-[29px] flex items-center justify-end pr-[9px] rounded-t-lg bg-[#f3f3f3]"><button aria-label="Close list" class="w-3 h-3 text-[#777]"><svg class="w-3 h-3"><use href="#thin-cross" /></svg></button></div>
    <div class="ml-auto mr-3 mt-[13px] w-[91px] flex flex-col gap-[7px]">
      <button class="h-5 rounded border border-[#d0d0d0] bg-[#fdfdfd]">Add</button>
      <button class="h-5 -mt-[2px] rounded border border-[#d0d0d0] bg-[#fdfdfd]">Insert Prev</button>
      <button class="h-5 -mt-px rounded border border-[#d0d0d0] bg-[#fdfdfd]">Insert Next</button>
      <button class="h-5 rounded border border-[#d0d0d0] bg-[#fdfdfd]">Generate</button>
      <button class="relative h-5 rounded border border-[#d0d0d0] bg-[#fdfdfd]">Modify/Show
        <span class="absolute -left-[7px] -right-[2px] -top-[5px] -bottom-[6px] border-4 border-[#ff0000] rounded-lg"></span>
        <span class="absolute left-[94px] top-[-2px] text-sm leading-4 text-[#ff0000] font-['Open_Sans',sans-serif]">4</span>
      </button>
      <button class="h-5 rounded border border-[#d0d0d0] bg-[#fdfdfd]">Delete</button>
      <button class="h-5 mt-[22px] rounded border border-[#d0d0d0] bg-[#fdfdfd]">Close</button>
    </div>
  </section>

  <!-- Compose Construction Stage window -->
  <section class="absolute left-[272px] top-[253px] w-[784px] h-[614px] rounded-lg border border-[#aaa] bg-[#f0f0f0] shadow-[0_12px_36px_rgba(0,0,0,0.35)] font-['DejaVu_Sans_Condensed',sans-serif]">
    <div class="h-[30px] flex items-center pl-[9px] pr-[9px] rounded-t-lg bg-[#f3f3f3]">
      <h2 class="flex-1 text-xs text-[#8c8c8c] font-['Roboto',sans-serif]">Compose Construction Stage</h2>
      <button aria-label="Close dialog" class="w-3 h-3 text-[#777]"><svg class="w-3 h-3"><use href="#thin-cross" /></svg></button>
    </div>
    <form class="px-3 pt-1" onsubmit="return false">
      <div class="flex gap-[13px]">
        <div class="w-[455px]">
          <fieldset class="min-w-0 h-[95px] border border-[#dcdcdc]">
            <legend class="ml-1 px-1 pt-px">Stage</legend>
            <div class="relative h-[25px] pt-1 pl-[14px] flex items-center">
              <label for="stage" class="w-20 pt-1">Stage :</label>
              <select id="stage" class="w-[300px] h-5 pl-[2px] appearance-none border border-[#ddd] bg-white outline-none"><option>CS1</option></select>
              <svg class="absolute left-[379px] top-[12px] w-[10px] h-[6px] pointer-events-none"><use href="#chevron" /></svg>
              <span data-spin class="ml-[2px] w-[14px] h-5 flex flex-col"></span>
              <span class="absolute left-[84px] -top-px w-[312px] h-[30px] border-4 border-[#ff0000] rounded-lg"></span>
              <span class="ml-2 text-sm leading-4 text-[#ff0000] font-['Open_Sans',sans-serif]">5</span>
            </div>
            <div class="h-[26px] pl-[14px] flex items-center">
              <label for="name" class="w-[81px] pt-[2px]">Name :</label>
              <input id="name" value="CS1" class="w-[292px] h-5 pl-1 border-b border-[#868686] bg-white outline-none" />
            </div>
            <div class="h-6 pl-[14px] flex items-center">
              <label for="duration" class="w-[81px]">Duration :</label>
              <input id="duration" value="30" class="w-[275px] h-5 pl-1 border-b border-[#868686] bg-white outline-none" />
              <span data-spin class="w-[17px] h-5 flex flex-col"></span>
              <span class="ml-4 pt-1">day(s)</span>
            </div>
          </fieldset>
          <fieldset class="min-w-0 mt-2 h-[47px] border border-[#dcdcdc]">
            <legend class="ml-1 px-1 pt-px">Save Result</legend>
            <div class="relative h-[31px] pl-[94px] flex items-center">
              <label class="w-[115px] flex items-center gap-[3px]"><input type="checkbox" checked class="w-[13px] h-[13px] accent-[#005fb8]" />Stage</label>
              <label class="flex items-center gap-[3px]"><input type="checkbox" checked class="w-[13px] h-[13px] accent-[#005fb8]" />Additional Steps</label>
              <span class="absolute left-[86px] -top-px w-[241px] h-[29px] border-4 border-[#ff0000] rounded-lg"></span>
              <span class="absolute left-[337px] top-[5px] text-sm leading-4 text-[#ff0000] font-['Open_Sans',sans-serif]">6</span>
            </div>
          </fieldset>
          <button class="mt-[11px] w-full h-5 rounded border border-[#d0d0d0] bg-[#fdfdfd]">Current Stage Information...</button>
        </div>

        <fieldset class="flex-1 min-w-0 h-[179px] border border-[#dcdcdc]">
          <legend class="ml-1 px-1 pt-px">Additional Steps</legend>
          <div class="flex">
            <div class="w-[167px] pl-[7px] pr-[6px]">
              <div class="pt-[10px] flex items-center"><label for="day" class="w-10 pt-[2px]">Day :</label><input id="day" value="0" class="w-[109px] h-5 pl-1 border-b border-[#868686] bg-white outline-none" /></div>
              <p class="leading-6 whitespace-pre">( Example: 1, 3, 7, 14  )</p>
              <fieldset class="min-w-0 mt-[14px] h-[90px] border border-[#dcdcdc]">
                <legend class="ml-1 px-1 pt-px">Auto Generation</legend>
                <div class="h-[49px] pl-[5px] flex items-center">
                  <label for="stepNumber" class="w-[92px] whitespace-pre">Step Number  :</label>
                  <input id="stepNumber" value="0" class="w-[30px] h-[18px] pl-1 border-b border-[#868686] bg-white outline-none" />
                  <span data-spin class="w-[17px] h-[18px] flex flex-col"></span>
                </div>
                <button class="ml-[7px] w-[136px] h-[17px] leading-3 rounded border border-[#d0d0d0] bg-[#fdfdfd]">Generate Steps</button>
              </fieldset>
            </div>
            <div class="w-[114px] pt-[3px]">
              <div class="w-[112px] grid grid-cols-2 gap-x-2 gap-y-1">
                <button class="h-[19px] rounded border border-[#d0d0d0] bg-[#fdfdfd]">Add</button>
                <button class="h-[19px] rounded border border-[#d0d0d0] bg-[#fdfdfd]">Delete</button>
                <button class="h-[19px] rounded border border-[#d0d0d0] bg-[#fdfdfd]">Modify</button>
                <button class="h-[19px] rounded border border-[#d0d0d0] bg-[#fdfdfd]">Clear</button>
              </div>
              <div class="mt-[2px] h-[111px] border border-[#828790] bg-white">
                <table class="w-full text-left"><thead><tr class="h-[26px]"><th class="w-[57px] pl-[6px] font-normal border-r border-[#e5e5e5]">Step</th><th class="pl-[5px] font-normal">Day</th></tr></thead></table>
              </div>
            </div>
          </div>
        </fieldset>
      </div>

      <div class="mt-[10px] h-[19px] flex items-end">
        <button class="w-[53px] h-[19px] border-r-2 border-t border-t-white border-r-[#777]">Element</button>
        <button class="w-[57px] h-[17px] border-r-2 border-t border-t-white border-r-[#777]">Boundary</button>
        <button class="w-[42px] h-[17px] border-r-2 border-t border-t-white border-r-[#777]">Load</button>
      </div>
      <div class="h-[297px] pl-[21px] flex border-t border-l border-t-white border-l-white border-r-2 border-b-2 border-r-[#777] border-b-[#777]">
        <div class="w-[305px]">
          <div class="h-[33px] flex items-end"><span class="pb-[2px] pl-[2px] w-[81px]">Group List</span><button class="mb-1 w-[23px] h-[19px] leading-3 rounded border border-[#d0d0d0] bg-[#fdfdfd]">...</button></div>
          <ul class="h-[250px] pt-[2px] pl-[2px] border border-[#828790] bg-white leading-[13px]"><li>Stage_2</li><li>Stage_3</li><li>Complete_structure</li></ul>
        </div>
        <fieldset class="min-w-0 w-[195px] ml-[11px] mt-[11px] h-[269px] pl-[10px] pr-[10px] border border-[#dcdcdc]">
          <legend class="-ml-[6px] px-1 pt-px">Activation</legend>
          <div class="h-[46px] flex items-end">
            <label for="age" class="w-[43px] pb-[3px] whitespace-pre">Age  :</label>
            <input id="age" value="0" class="w-[68px] h-[21px] pl-1 border-b border-[#868686] bg-white outline-none" />
            <span data-spin class="w-[17px] h-[21px] flex flex-col"></span><span class="pl-[6px] pb-[3px]">day(s)</span>
          </div>
          <p class="h-[29px] pt-3">Group List</p>
          <div class="h-[147px] border border-[#828790] bg-white">
            <table class="w-[170px] text-left"><thead><tr class="h-[26px]"><th class="w-[87px] pl-[6px] font-normal border-r border-[#e5e5e5]">Name</th><th class="pl-[5px] font-normal border-r border-[#e5e5e5]">Age</th></tr></thead>
            <tbody><tr class="h-4"><td class="pl-[6px]">Stage_1</td><td class="pl-[6px]">5</td></tr></tbody></table>
          </div>
          <div class="mt-[5px] pl-px flex gap-2">
            <button class="w-[51px] h-[19px] rounded border border-[#d0d0d0] bg-[#fdfdfd]">Add</button>
            <button class="w-[51px] h-[19px] rounded border border-[#d0d0d0] bg-[#fdfdfd]">Modify</button>
            <button class="w-[51px] h-[19px] rounded border border-[#d0d0d0] bg-[#fdfdfd]">Delete</button>
          </div>
        </fieldset>
        <fieldset class="min-w-0 w-[195px] ml-[7px] mt-[11px] h-[269px] pl-[9px] pr-[10px] border border-[#dcdcdc]">
          <legend class="-ml-[5px] px-1 pt-px">Deactivation</legend>
          <div class="-ml-[3px] h-[46px] flex items-end">
            <label for="force" class="w-[92px] leading-[19px]">Element Force<br />Redistribution :</label>
            <input id="force" value="100" class="mb-[3px] w-[46px] h-5 pl-1 border-b border-[#868686] bg-white outline-none" />
            <span data-spin class="mb-[3px] w-[17px] h-5 flex flex-col"></span><span class="pl-[6px]">%</span>
          </div>
          <p class="h-[29px] pt-3">Group List</p>
          <div class="h-[147px] border border-[#828790] bg-white">
            <table class="w-[170px] text-left"><thead><tr class="h-[26px]"><th class="w-[87px] pl-[6px] font-normal border-r border-[#e5e5e5]">Name</th><th class="pl-[5px] font-normal border-r border-[#e5e5e5]">Redist.</th></tr></thead></table>
          </div>
          <div class="mt-[5px] pl-px flex gap-2">
            <button class="w-[51px] h-[19px] rounded border border-[#d0d0d0] bg-[#fdfdfd]">Add</button>
            <button class="w-[51px] h-[19px] rounded border border-[#d0d0d0] bg-[#fdfdfd]">Modify</button>
            <button class="w-[51px] h-[19px] rounded border border-[#d0d0d0] bg-[#fdfdfd]">Delete</button>
          </div>
        </fieldset>
      </div>

      <div class="h-[34px] flex items-center">
        <label class="w-[343px] flex items-center gap-[2px]"><input type="checkbox" class="w-[13px] h-[13px]" />Load Incremental Steps for Material Nonlinear Analysis</label>
        <input aria-label="Incremental steps" value="5" disabled class="w-[86px] h-[19px] pl-1 border border-[#fafafa] text-[#888]" />
      </div>
      <div class="mt-[2px] pr-px flex justify-end gap-2">
        <button class="w-[82px] h-[22px] rounded border border-[#d0d0d0] bg-[#fdfdfd]">OK</button>
        <button class="w-[82px] h-[22px] rounded border border-[#d0d0d0] bg-[#fdfdfd]">Cancel</button>
        <button class="w-[82px] h-[22px] rounded border border-[#d0d0d0] bg-[#fdfdfd]">Apply</button>
      </div>
    </form>
  </section>

  <script>
    const icon = (id, cls) => `<svg class="${cls}"><use href="#${id}" /></svg>`;
    const iconButton = (id, cls) => `<button aria-label="${id}" class="${cls}">${icon(id, 'w-[17px] h-[17px]')}</button>`;

    // quick access bar
    document.getElementById('quickBar').innerHTML =
      ['q-new', 'q-open', 'q-info', 'q-save', 'q-print', 'q-preview'].map(id => iconButton(id, 'w-[18px] h-[18px]')).join('') +
      '<button aria-label="Customize" class="ml-[14px]"><svg class="w-[7px] h-2" viewBox="0 0 7 8"><path d="M1 1h5M1 4h5L3.500 7z" fill="#444" stroke="#444" stroke-width=".8" /></svg></button>';

    // load types
    const loadTypes = ['Static Loads', 'Dynamic Loads', 'Settlement/Misc.', 'Temp./Prestress', 'Construction Stage', 'Load Tables', 'Moving Load', 'Heat of Hydration'];
    document.getElementById('loadTypes').innerHTML = loadTypes.map((name, i) => {
      const on = name === 'Construction Stage';
      const z = i === 4 ? 'relative z-10 -ml-[3px] w-[126px] pl-[2px] border border-[#555] bg-[#c6c6c8]' : '';
      return `<label class="h-[22px] flex items-center gap-1 ${z}">
        <input type="radio" name="loadType" ${on ? 'checked' : ''} class="appearance-none shrink-0 w-[15px] h-[15px] rounded-full border border-[#555] bg-[#c4c4c4] shadow-[inset_0_0_0_2px_#f4f4f4] checked:bg-[#2f6fe4]" />${name}
        ${on ? '<span class="absolute -left-[9px] -top-[6px] w-[139px] h-[32px] border-4 border-[#ff0000] rounded-lg"></span><span class="absolute left-[128px] top-[22px] text-sm leading-4 text-[#ff0000]">2</span>' : ''}
      </label>`;
    }).join('');

    // main toolbar: '|' separator, ':' grip, 'v' caret, '[]' combo box
    const bar = [':', 't-back', 'v', 't-fwd', 'v', ':', 't-group', 't-tree', '|', 't-select', 't-window', 't-poly', 't-circle', '|', 't-undo', 't-recent', '|',
      't-un1', 't-un2', 't-un3', '|', 't-node', '[]', 't-elem', '[]', ':', 't-act1', 't-act2', 't-act3', 't-act4', 't-act5', '|', 't-act6', ':',
      't-sel', 't-persp', 't-hide', 't-mon', 't-mon2', '|', 't-n1', 't-n2', ':', 't-chk', 't-unlock', 't-lock'];
    document.getElementById('mainBar').innerHTML = bar.map((b, i) => {
      if (b === '|') return '<span class="ml-1 mr-[3px] w-px h-[15px] bg-[#222]"></span>';
      if (b === ':') return `<span class="${i ? 'ml-[6px]' : 'ml-1'} mr-1 w-[3px] h-4 bg-[repeating-linear-gradient(#333_0_2px,transparent_2px_4px)]"></span>`;
      if (b === 'v') return '<span class="w-[9px]">' + icon('caret', 'w-[6px] h-[6px] ml-[3px]') + '</span>';
      if (b === '[]') return '<span class="mx-[2px] flex"><input aria-label="Selection" class="w-[101px] h-5 bg-white outline-none" /><span class="w-[14px] h-5 flex items-center justify-center bg-[#a4abb5]">' + icon('caret', 'w-[7px] h-[7px]') + '</span></span>';
      if (b === 't-unlock') return iconButton(b, 'w-[22px] h-[23px] pl-[2px] bg-[#858585] border border-[#333]');
      return iconButton(b, 'w-[22px] h-[22px] pl-[2px]');
    }).join('');

    // view toolbar
    const views = [':', 'v-fit', 'v-win', 'v-in', 'v-out', 'v-fit', ':', 'v-dyn', 'v-pan', 'v-rot', ':', 'v-redraw', 'v-full', '-', 'v-cube1', 'v-cube2', 'v-cube3', 'v-cube4', 'v-axis', '-', 'v-prev', 'v-lock'];
    document.getElementById('viewBar').innerHTML = views.map(v => {
      if (v === ':') return '<span class="my-[3px] w-4 h-[3px] bg-[repeating-linear-gradient(90deg,#333_0_3px,transparent_3px_5px)]"></span>';
      if (v === '-') return '<span class="mt-[3px] mb-[5px] w-[14px] h-px bg-[#555]"></span>';
      return iconButton(v, 'w-[18px] h-[22px]');
    }).join('');

    // spin buttons
    document.querySelectorAll('[data-spin]').forEach(el => {
      el.innerHTML = ['M1 4h6L4 1z', 'M1 1h6L4 4z'].map((d, i) =>
        `<button aria-label="${i ? 'Down' : 'Up'}" class="flex-1 min-h-0 flex items-center justify-center border border-[#a0a0a0] bg-[#f0f0f0]"><svg class="w-[7px] h-[4px]" viewBox="0 0 8 5"><path d="${d}" /></svg></button>`).join('');
    });

    // message tab navigation
    document.getElementById('msgNav').innerHTML = ['M4 3v8M11 3v8L6 7z', 'M10 3v8L5 7z', 'M5 3v8l5-4z', 'M4 3v8l5-4zM11 3v8'].map(d =>
      `<button aria-label="Scroll tabs" class="w-[18px] h-[17px] border border-[#999]"><svg class="w-[15px] h-[14px]" viewBox="0 0 15 14"><path d="${d}" fill="#999" stroke="#999" /></svg></button>`).join('');

    // tree rows: [level, expander, icon, text]
    const rows = [
      [1, '+', 'i-elem', 'Elements : 52'],
      [0, '-', 'i-prop', 'Properties'], [1, '+', 'i-prop', 'Material : 2'], [1, '+', 'i-tdm', 'Time Dependent Material(C&S)'], [1, '+', 'i-tdm', 'Time Dependent Material(Comp. Strength)'],
      [1, '+', 'i-link', 'Time Dependent Material Link'], [1, '+', 'i-sect', 'Section : 1'], [1, '+', 'i-reinf', 'Reinforcement : 1'],
      [0, '-', 'i-bound', 'Boundaries'], [1, '+', 'i-supp', 'Supports : 8'], [1, '', 'i-elink', 'Elastic Link : 8'],
      [0, '-', 'i-load', 'Static Loads'], [1, '+', 'i-case', 'Static Load Case 1 [Self_weight ; ]'], [1, '+', 'i-case', 'Static Load Case 2 [Non-Structure dead ; ]'],
      [1, '+', 'i-case', 'Static Load Case 3 [Prestress ; ]'], [1, '+', 'i-case', 'Static Load Case 4 [2nd Dead ; ]'], [1, '+', 'i-case', 'Static Load Case 5 [Wind ; ]'],
      [0, '-', 'i-tendon', 'Prestressing Tendon'], [1, '+', 'i-tprop', 'Tendon Property : 1'], [1, '+', 'i-tprof', 'Tendon Profile : 24'],
      [0, '-', 'i-mload', 'Moving Load Analysis'], [1, '', 'i-mload', 'Moving Load Code [ EUROCODE ]'], [1, '+', 'i-lane', 'Traffic Line Lanes : 4'], [1, '+', 'i-truck', 'Vehicles : 1'], [1, '+', 'i-mcase', 'Moving Load Cases : 2'],
      [0, '-', 'i-settle', 'Settlement Analysis'], [1, '+', 'i-settle', 'Settlement Group : 4'], [1, '+', 'i-scase', 'Settlement Load Cases : 1'],
      [0, '-', 'i-cs', 'Construction Stage : 5'],
      [1, '-', 'i-cs', 'CS1 [30 day(s)]'], [2, '', 'i-step', 'Additional Step=0'],
      [2, '-', 'i-sg', 'Structure Group'], [3, '-', 'i-active', 'Active'], [4, '', 'i-sg', 'Stage_1 [ Age=5 ]'],
      [2, '-', 'i-bound', 'Boundary Group'], [3, '-', 'i-active', 'Active'], [4, '', 'i-bound', 'Elastic links [ Original ]'], [4, '', 'i-bound', 'BG1 [ Original ]'],
      [2, '-', 'i-load', 'Load Group'], [3, '-', 'i-active', 'Active'], [4, '', 'i-load', 'SW [ Step,First ]'], [4, '', 'i-load', 'Non-structure [ Step,First ]'], [4, '', 'i-load', 'Tendon-stage1 [ Step,First ]'],
      [1, '-', 'i-cs', 'CS2 [30 day(s)]'], [2, '', 'i-step', 'Additional Step=0'],
      [2, '-', 'i-sg', 'Structure Group'], [3, '-', 'i-active', 'Active'], [4, '', 'i-sg', 'Stage_2 [ Age=5 ]'],
      [2, '-', 'i-bound', 'Boundary Group'], [3, '-', 'i-active', 'Active'], [4, '', 'i-bound', 'BG2 [ Original ]'],
      [2, '-', 'i-load', 'Load Group'], [3, '-', 'i-active', 'Active'], [4, '', 'i-load', 'Tendon-stage2 [ Step,First ]'],
      [1, '-', 'i-cs', 'CS3 [30 day(s)]'], [2, '', 'i-step', 'Additional Step=0'],
    ];
    // levels still open below the last visible row
    const openAtEnd = [false, true, true];

    function hasNext(index, level) {
      for (let i = index + 1; i < rows.length; i++) {
        if (rows[i][0] === level) return true;
        if (rows[i][0] < level) return false;
      }
      return !!openAtEnd[level];
    }

    document.getElementById('tree').innerHTML = rows.map(([level, exp, ic, text], i) => {
      let cells = '';
      for (let l = 0; l <= level; l++) {
        const next = hasNext(i, l);
        let d = '';
        if (l < level) d = next ? 'M7.5 0v16' : '';
        else d = `M7.5 0v${next ? 16 : 8}M8 8.5h${exp ? 11 : 12}`;
        let box = '';
        if (l === level && exp) {
          box = '<path d="M3.5 4.5h8v8h-8z" fill="#fff" stroke="#8a8f98" /><path d="M5 8.5h5" stroke="#2a4a9a" />' + (exp === '+' ? '<path d="M7.5 6v5" stroke="#2a4a9a" />' : '');
        }
        cells += `<svg class="w-5 h-4 shrink-0" viewBox="0 0 20 16"><path d="${d}" fill="none" stroke="#999" stroke-dasharray="1 1" />${box}</svg>`;
      }
      const sel = text === 'Construction Stage : 5' ? 'bg-[#e2e2e6]' : '';
      return `<li class="h-4 flex items-center">${cells}${icon(ic, 'w-4 h-4 shrink-0 -ml-px')}<span class="ml-1 px-[2px] leading-4 ${sel}">${text.replace('&', '&amp;')}</span></li>`;
    }).join('');

    // girder model, nodes along the line plus the supports
    const nodes = [721, 745, 770, 795, 819, 845, 869, 894, 918, 943, 963, 979, 1003, 1019, 1044, 1069, 1093, 1118, 1143, 1168, 1193, 1218, 1243, 1268, 1293, 1317, 1342];
    const lineY = x => 303 - (x - 1342) * 0.1481;
    const dot = (x, y) => `<circle cx="${x}" cy="${y}" r="2" fill="#0000ff" />`;
    document.getElementById('model').innerHTML =
      `<path d="M721 ${lineY(721)}L1342 303" stroke="#0000ff" />` +
      nodes.map(x => dot(x, lineY(x))).join('') +
      [[956, 388], [973, 396], [1334, 332], [1351, 340]].map(([x, y]) => dot(x, y)).join('');
  </script>
</body>
</html>
